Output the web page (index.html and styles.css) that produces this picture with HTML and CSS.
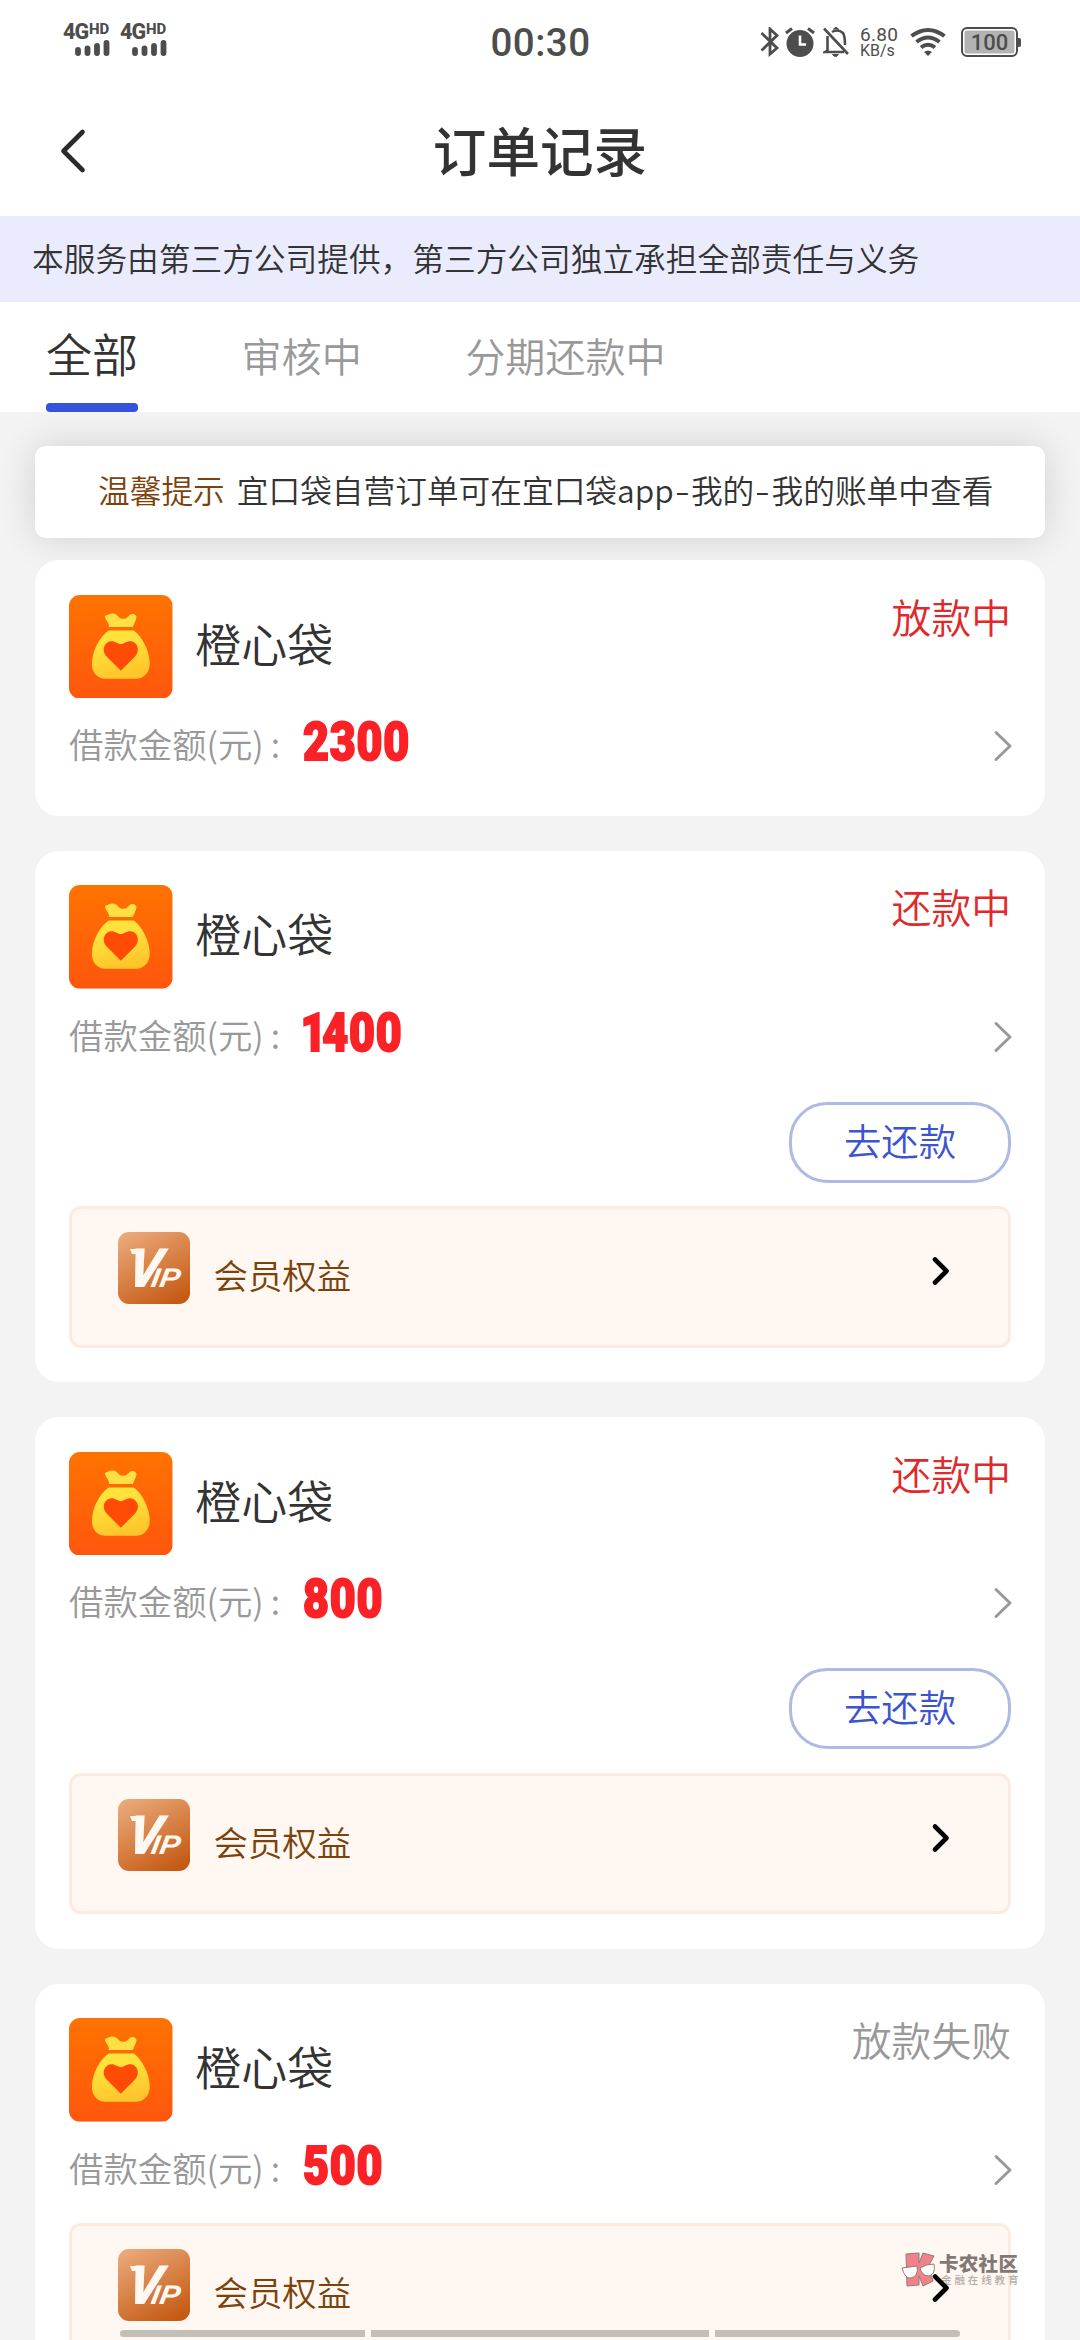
FILE: index.html
```html
<!DOCTYPE html>
<html lang="zh-CN">
<head>
<meta charset="utf-8">
<title>订单记录</title>
<link rel="stylesheet" href="styles.css">
</head>
<body>
<svg width="0" height="0" class="defs">
  <defs>
    <linearGradient id="orange" x1="0" y1="0" x2="0" y2="1"><stop offset="0" stop-color="#ff7300"/><stop offset="1" stop-color="#ff560d"/></linearGradient>
    <linearGradient id="gold" x1="0" y1="0" x2="0.3" y2="1"><stop offset="0" stop-color="#ffe63c"/><stop offset=".4" stop-color="#ffe03a"/><stop offset="1" stop-color="#ffc62c"/></linearGradient>
    <linearGradient id="bronze" x1="0.2" y1="0" x2="0.75" y2="1"><stop offset="0" stop-color="#eaa777"/><stop offset="1" stop-color="#c55a14"/></linearGradient>
  </defs>
  <symbol id="bag" viewBox="0 0 104 104">
    <rect width="104" height="104" rx="11" fill="url(#orange)"/>
    <path d="M36 21C41 19 43 17 48 20C52 25 56 25 60 21C63 17 70 20 67 25L64 32H40C41 28 36 25 36 21Z" fill="#ffe044"/>
    <path d="M40 35.500H65C73 41 81 56 81 69C81 78 75 84 67 84H37C28 84 23 78 23 69C23 56 31 41 40 35.500Z" fill="url(#gold)"/>
    <path d="M52 76L38 62C30 53 39 42 48 48Q52 51 56 48C65 42 74 53 66 62Z" fill="#ff4b06"/>
  </symbol>
  <symbol id="signal" viewBox="0 0 36 17">
    <path d="M3 11V14M12.500 9.500V14M22 7V14M31.500 4V14" stroke="#4d4d4d" stroke-width="5.800" stroke-linecap="round"/>
  </symbol>
</svg>

<header class="statusbar">
  <div class="sims">
    <div class="sim"><div class="net">4G<span>HD</span></div><svg class="bars"><use href="#signal"/></svg></div>
    <div class="sim"><div class="net">4G<span>HD</span></div><svg class="bars"><use href="#signal"/></svg></div>
  </div>
  <div class="clock">00:30</div>
  <div class="tray">
    <svg width="20" height="30" viewBox="0 0 20 30" fill="none" stroke="#4d4d4d" stroke-width="2.800"><path d="M1.500 6L17 21L10 27V2L17 8.500L1.500 23.500"/></svg>
    <svg class="alarm" width="30" height="30" viewBox="0 0 30 30" fill="none" stroke="#4d4d4d"><circle cx="15" cy="16.500" r="13.500" fill="#4d4d4d" stroke="none"/><path d="M1 6L7 1.500M29 6L23 1.500" stroke-width="3"/><path d="M15 8.500V17.500H21" stroke="#fff" stroke-width="2.600"/></svg>
    <svg class="bell" width="26" height="30" viewBox="0 0 26 30" fill="none" stroke="#4d4d4d" stroke-width="2.600"><path d="M1 1.500L25 27M4.500 9V23.500L2 25H21M9 5Q15 1.500 20 6Q22 9 22 18"/><path d="M10 2.500L13 0L16 2.500M9.500 27.500H15.500L12.500 30Z" stroke-width="1" fill="#4d4d4d"/></svg>
    <div class="speed"><div class="rate">6.80</div><div class="unit">KB/s</div></div>
    <svg class="wifi" width="36" height="30" viewBox="0 0 36 30" fill="none" stroke="#4d4d4d" stroke-width="4"><path d="M1.500 9Q18-3 34.500 9M6.500 15Q18 6 29.500 15M11 20.500Q18 15 25 20.500"/><path d="M14 25Q18 22 22 25L18 29Z" fill="#4d4d4d" stroke="none"/></svg>
    <div class="battery">100</div><div class="nub"></div>
  </div>
</header>

<nav class="titlebar">
  <svg class="back" width="28" height="46" viewBox="0 0 28 46"><path d="M23.500 4L4.500 23L23.500 42" fill="none" stroke="#2b2b2b" stroke-width="4.600" stroke-linecap="round" stroke-linejoin="round"/></svg>
  <h1>订单记录</h1>
</nav>
<div class="banner">本服务由第三方公司提供，第三方公司独立承担全部责任与义务</div>
<div class="tabs">
  <div class="tab active">全部</div>
  <div class="tab">审核中</div>
  <div class="tab">分期还款中</div>
</div>

<main>
  <div class="notice"><b>温馨提示</b><span>宜口袋自营订单可在宜口袋app<i>-</i>我的<i>-</i>我的账单中查看</span></div>

  <section class="card">
    <div class="top"><svg class="logo"><use href="#bag"/></svg><div class="name">橙心袋</div><div class="state">放款中</div></div>
    <div class="amount"><span class="label">借款金额(元)<i>:</i></span><span class="num">2300</span><svg class="more" viewBox="0 0 20 32"><path d="M3 2.500L17 16L3 29.500"/></svg></div>
  </section>

  <section class="card">
    <div class="top"><svg class="logo"><use href="#bag"/></svg><div class="name">橙心袋</div><div class="state">还款中</div></div>
    <div class="amount"><span class="label">借款金额(元)<i>:</i></span><span class="num"><span class="one">1</span>400</span><svg class="more" viewBox="0 0 20 32"><path d="M3 2.500L17 16L3 29.500"/></svg></div>
    <div class="actions"><div class="pay">去还款</div></div>
    <div class="perks"><svg class="badge" viewBox="0 0 72 72"><rect width="72" height="72" rx="11" fill="url(#bronze)"/><path d="M12 17H22V22H14Z" fill="#fff8f1"/><text class="vip-v" transform="translate(9 54) skewX(-9)" textLength="31" lengthAdjust="spacingAndGlyphs">V</text><text class="vip-ip" transform="translate(32 55) skewX(-9)" textLength="29" lengthAdjust="spacingAndGlyphs">IP</text></svg><span>会员权益</span><svg class="go" viewBox="0 0 20 30"><path d="M4 3.500L15.500 15L4 26.500"/></svg></div>
  </section>

  <section class="card">
    <div class="top"><svg class="logo"><use href="#bag"/></svg><div class="name">橙心袋</div><div class="state">还款中</div></div>
    <div class="amount"><span class="label">借款金额(元)<i>:</i></span><span class="num">800</span><svg class="more" viewBox="0 0 20 32"><path d="M3 2.500L17 16L3 29.500"/></svg></div>
    <div class="actions"><div class="pay">去还款</div></div>
    <div class="perks"><svg class="badge" viewBox="0 0 72 72"><rect width="72" height="72" rx="11" fill="url(#bronze)"/><path d="M12 17H22V22H14Z" fill="#fff8f1"/><text class="vip-v" transform="translate(9 54) skewX(-9)" textLength="31" lengthAdjust="spacingAndGlyphs">V</text><text class="vip-ip" transform="translate(32 55) skewX(-9)" textLength="29" lengthAdjust="spacingAndGlyphs">IP</text></svg><span>会员权益</span><svg class="go" viewBox="0 0 20 30"><path d="M4 3.500L15.500 15L4 26.500"/></svg></div>
  </section>

  <section class="card rejected">
    <div class="top"><svg class="logo"><use href="#bag"/></svg><div class="name">橙心袋</div><div class="state">放款失败</div></div>
    <div class="amount"><span class="label">借款金额(元)<i>:</i></span><span class="num">500</span><svg class="more" viewBox="0 0 20 32"><path d="M3 2.500L17 16L3 29.500"/></svg></div>
    <div class="perks"><svg class="badge" viewBox="0 0 72 72"><rect width="72" height="72" rx="11" fill="url(#bronze)"/><path d="M12 17H22V22H14Z" fill="#fff8f1"/><text class="vip-v" transform="translate(9 54) skewX(-9)" textLength="31" lengthAdjust="spacingAndGlyphs">V</text><text class="vip-ip" transform="translate(32 55) skewX(-9)" textLength="29" lengthAdjust="spacingAndGlyphs">IP</text></svg><span>会员权益</span><svg class="go" viewBox="0 0 20 30"><path d="M4 3.500L15.500 15L4 26.500"/></svg></div>
  </section>
</main>

<div class="watermark">
  <svg width="36" height="36" viewBox="0 0 36 36" stroke="#7d6864" stroke-width="1"><path d="M5 2L18 1V11L22 1L33 4L27 15L32 29L22 34L18 24V33L6 34Z" fill="#f26d78"/><path d="M1 16L16 14Q18 24 10 26Q4 27 1 16ZM19 16Q25 12 33 12Q35 22 28 24Q21 24 19 16Z" fill="#fff"/></svg>
  <div class="wm-text"><div class="wm-name">卡农社区</div><div class="wm-sub">金融在线教育</div></div>
</div>
<div class="homebar"><i></i><i></i><i></i></div>
</body>
</html>
```
FILE: styles.css
```css
* { box-sizing: border-box; }
html, body { margin: 0; }
body {
  position: relative;
  width: 1080px;
  height: 2340px;
  overflow: hidden;
  display: flex;
  flex-direction: column;
  background: #f3f3f3;
  color: #333;
  font-family: "Noto Sans CJK SC", sans-serif;
  font-size: 31.7px;
  font-weight: 350;
}
svg { display: block; flex: none; }
.defs { position: absolute; }

.statusbar {
  flex: none;
  height: 84px;
  padding: 0 59px 0 63px;
  background: #fff;
  color: #4d4d4d;
  display: grid;
  grid-template-columns: 1fr auto 1fr;
  font-family: Roboto, sans-serif;
}
.sims { display: flex; gap: 9px; padding-top: 22px; }
.sim { width: 48px; }
.net { display: flex; font: 800 21.5px/20px Roboto, sans-serif; letter-spacing: -1px; }
.net span { font-size: 15px; line-height: 15px; letter-spacing: -.2px; margin-left: 1px; }
.bars { width: 36px; height: 17px; margin: -3px 0 0 12px; }
.clock { padding-top: 23px; font: 500 38.5px/40px Roboto, sans-serif; letter-spacing: .5px; margin-left: -3px; }
.tray { display: flex; justify-content: flex-end; padding-top: 27px; }
.alarm { margin-left: 5px; }
.bell { margin-left: 8px; }
.speed { width: 38px; margin: 0 12px 0 11px; font-weight: 400; }
.rate { font-size: 19px; line-height: 16px; letter-spacing: .3px; }
.unit { font-size: 16px; line-height: 16px; letter-spacing: 0; }
.battery {
  width: 57px; height: 30px; margin-left: 15px;
  border: 2px solid #4d4d4d; border-radius: 6px;
  background: #b3b3b3; box-shadow: inset 0 0 0 1.500px #fff;
  font: 500 22px/27px Roboto, sans-serif; text-align: center;
}
.nub { width: 3px; height: 9px; margin-top: 11px; background: #4d4d4d; border-radius: 0 2px 2px 0; }

.titlebar {
  flex: none; height: 132px; padding-top: 2px;
  display: grid; grid-template-columns: 120px 1fr 120px; align-items: center;
  background: #fff;
}
.back { margin-left: 59px; }
h1 { margin: 0; text-align: center; font-size: 53.6px; line-height: 60px; font-weight: 500; padding-bottom: 4px; }

.banner { flex: none; height: 86px; padding-left: 32px; line-height: 83px; background: #eaecfd; }
.tabs { position: relative; z-index: 1; flex: none; height: 110px; padding-left: 46px; display: flex; gap: 103.500px; background: #fff; }
.tab { font-size: 40.1px; line-height: 105px; color: #999; }
.tab.active { position: relative; width: 92px; color: #333; font-size: 46px; line-height: 100px; }
.tab.active::after {
  content: ""; position: absolute; left: 0; right: 0; bottom: 0;
  height: 9px; border-radius: 4px; background: #3553dc;
}

main { flex: none; padding: 34px 35px 0; display: flex; flex-direction: column; }
.notice {
  height: 92px; margin-bottom: 22px; padding-left: 63px;
  border-radius: 11px; background: #fff; box-shadow: 0 0 38px rgba(0,0,0,.14);
  display: flex; gap: 12px; line-height: 87px; white-space: nowrap;
}
.notice b { font-weight: inherit; color: #7c420b; }
.notice i { display: inline-block; font-style: normal; margin: 0 3.200px; transform: scaleX(1.35); }
.card { position: relative; background: #fff; border-radius: 24px; padding: 34.600px 34px; margin-bottom: 34.700px; }
.top { display: flex; height: 103.700px; }
.logo { width: 103.700px; height: 103.700px; }
.name { margin-left: 22.500px; font-size: 46px; line-height: 95px; }
.state { margin-left: auto; font-size: 39.8px; line-height: 42px; color: #df292b; }
.amount { height: 83px; display: flex; }
.label { width: 234px; font-size: 34.400px; line-height: 90px; color: #999; white-space: nowrap; }
.label i { font-style: normal; margin-left: 7px; }
.num {
  font: 900 54px/87px Roboto, sans-serif; color: #fa2227; letter-spacing: .9px;
  -webkit-text-stroke: 2px #fa2227;
  transform: scaleX(.83); transform-origin: 0 50%;
}
.one { margin: 0 -6px 0 -3px; }
.more { width: 20px; height: 32px; margin: 32px -2px 0 auto; fill: none; stroke: #999; stroke-width: 3; stroke-linecap: round; stroke-linejoin: round; }
.actions { display: flex; justify-content: flex-end; height: 134.400px; padding-top: 30px; }
.pay {
  width: 222px; height: 81px; flex: none;
  border: 3px solid #adbae3; border-radius: 38px;
  color: #3d54cf; font-size: 37.400px; line-height: 71px; text-align: center;
}
.perks {
  height: 141.600px; padding: 23px 57.500px 0 46px; display: flex;
  border: 3px solid #fdebe0; border-radius: 12px; background: #fff7f1;
  color: #7c420b; font-size: 34.400px; line-height: 84px;
}
.badge { width: 72px; height: 72px; margin-right: 23.500px; }
.vip-v { font: italic 700 53px "Liberation Sans", sans-serif; fill: #fff8f1; stroke: #fff8f1; stroke-width: 2.200px; }
.vip-ip { font: italic 700 27px "Liberation Sans", sans-serif; fill: #fff8f1; }
.go { position: relative; z-index: 2; width: 20px; height: 30px; margin: 24px 0 0 auto; fill: none; stroke: #000; stroke-width: 4.600; stroke-linecap: round; stroke-linejoin: round; }
.rejected .state { color: #999; }
.rejected .perks { margin-top: 18px; }

.watermark { position: absolute; z-index: 1; left: 901px; top: 2252px; display: flex; gap: 2px; opacity: .85; }
.wm-text { white-space: nowrap; }
.wm-name { font-size: 19.500px; line-height: 21px; font-weight: 900; color: #6c6460; letter-spacing: .3px; }
.wm-sub { font-size: 10.500px; line-height: 13px; color: #a8a09b; letter-spacing: 2.900px; font-weight: 500; padding-left: 2px; }
.homebar { position: absolute; z-index: 1; left: 120px; top: 2330px; display: flex; gap: 6px; background: #fffaf6; border-radius: 4px; overflow: hidden; }
.homebar i { height: 7px; background: #c4beb7; width: 245px; }
.homebar i:nth-child(2) { width: 338px; }
```
